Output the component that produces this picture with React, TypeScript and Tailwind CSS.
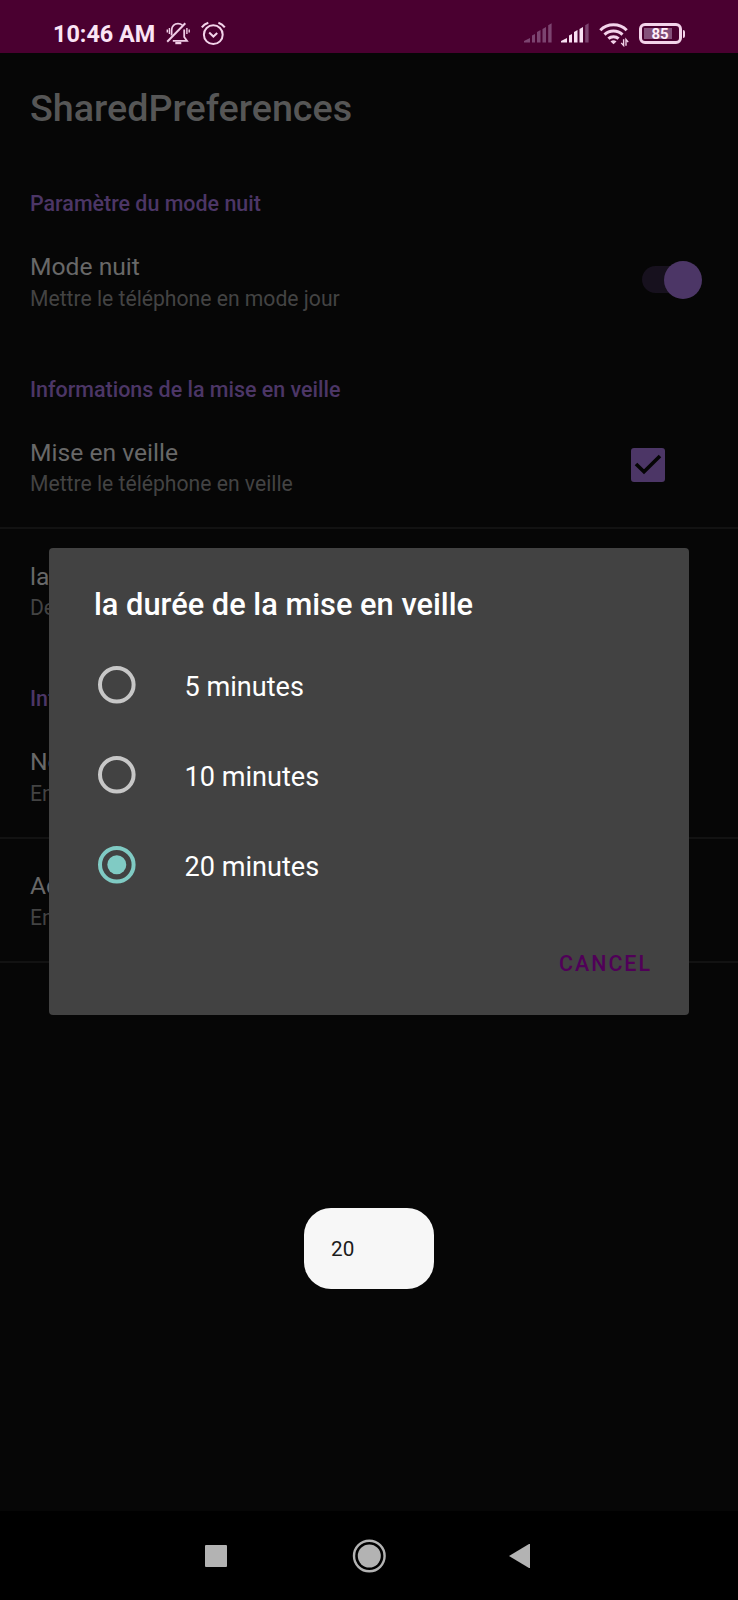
import React from "react";

function BellOff() {
  return (
    <svg className="absolute left-[166px] top-[21px]" width="25" height="25" viewBox="0 0 25 25" fill="none" stroke="#f0cde6" strokeWidth="1.8">
      <path d="M5.6 14.5V9.3C5.6 5 8.5 2.6 12 2.6c1.8 0 3.2.6 4.3 1.6M18.2 8.5V16l2.8 3.9H6.8" />
      <path d="M1.2 20.8 19.3 2.2" strokeWidth="2" />
      <path d="M9.3 22.1h6" strokeWidth="2.2" />
      <path d="M3.4 7v6M1.3 8.5v3M20.9 7v6M23.2 8.5v3" strokeWidth="1.4" />
    </svg>
  );
}

function Alarm() {
  return (
    <svg className="absolute left-[201px] top-[21px]" width="25" height="25" viewBox="0 0 25 25" fill="none" stroke="#f3d3ea" strokeWidth="2">
      <circle cx="12.3" cy="13.7" r="9.4" />
      <path d="M8.2 11.5l4.2 4 3.8-3.6" />
      <path d="M.8 6.4Q3 3.2 7.3 1.8M17.4 1.8Q21.4 3.2 23.8 6.4" />
    </svg>
  );
}

function Signal({ className, lit }: { className: string; lit: number }) {
  const bars = [
    "M0 19.5V18l6-3v4.5z",
    "M8 19.5v-7l3-1.5v8.5z",
    "M13 19.5V9l3.5-2v12.5z",
    "M18.5 19.5V6L22 4v15.5z",
    "M24.2 19.5V2.2L27.6.3v19.2z",
  ];
  return (
    <svg className={className} width="28" height="20" viewBox="0 0 28 20">
      {bars.map((d, i) => (
        <path key={d} d={d} fill={i < lit ? "#f8e0f2" : "#7c4470"} />
      ))}
    </svg>
  );
}

function Wifi() {
  return (
    <svg className="absolute left-[599px] top-[22px]" width="30" height="25" viewBox="0 0 30 25" fill="none" stroke="#f3d3ea" strokeWidth="3">
      <path d="M1.3 8.2a18.5 18.5 0 0 1 26.4 0" />
      <path d="M5.5 12.7a13 13 0 0 1 18 0" />
      <path d="M9.4 16.7a7.4 7.4 0 0 1 10.2 0" />
      <path d="M14.5 22.3l-3-2.8a4.6 4.6 0 0 1 6 0z" fill="#f3d3ea" stroke="none" />
      <path d="M24.6 17.2v6.3l-2.4-2.6M27 23.8v-6.3l2.2 2.6" strokeWidth="1.4" />
    </svg>
  );
}

function Battery() {
  return (
    <div className="absolute left-[639px] top-[23px] flex items-center">
      <div className="flex h-[21px] w-[43px] rounded-[6px] border-[3px] border-[#f3d3ea] p-[2px]">
        <div className="flex w-[28px] items-center justify-center bg-[#84507a] pl-[4px] text-[15px] font-bold leading-none text-[#ffeefa]"><span className="translate-y-px">85</span></div>
      </div>
      <div className="ml-px h-[8px] w-[2px] rounded-r bg-[#f3d3ea]" />
    </div>
  );
}

function StatusBar() {
  return (
    <header className="relative h-[53px] bg-[#4a0030]">
      <span className="absolute left-[53px] top-[18px] text-[23.4px] font-bold leading-[32px] text-[#fbe4f5]">10:46 AM</span>
      <BellOff />
      <Alarm />
      <Signal className="absolute left-[524px] top-[23px]" lit={0} />
      <Signal className="absolute left-[561px] top-[23px]" lit={4} />
      <Wifi />
      <Battery />
    </header>
  );
}

function Category({ children }: { children: string }) {
  return <h2 className="h-[61.5px] pl-[30px] pt-[32px] text-[21.45px] font-medium leading-[30px] text-[#4c3666]">{children}</h2>;
}

function Item({ title, summary, divider, children }: { title: string; summary: string; divider?: boolean; children?: React.ReactNode }) {
  return (
    <div className={`flex h-[124px] justify-between pl-[30px] pt-[33.5px] ${divider ? "border-b border-[#121212] shadow-[0_1px_0_#121212]" : ""}`}>
      <div>
        <p className="text-[24.65px] leading-[30px] text-[#686868]">{title}</p>
        <p className="pt-[0.5px] text-[21.15px] leading-[31px] text-[#434343]">{summary}</p>
      </div>
      {children}
    </div>
  );
}

function Switch() {
  return (
    <div className="mr-[36.5px] mt-[8.5px] flex h-[38px] w-[60px] items-center">
      <div className="h-[27px] w-[42px] rounded-full bg-[#17111e]" />
      <div className="-ml-[20px] size-[38px] shrink-0 rounded-full bg-[#4c3666]" />
    </div>
  );
}

function Check() {
  return (
    <svg className="mr-[73px] mt-[10.5px]" width="34" height="34" viewBox="0 0 34 34" fill="none">
      <rect width="34" height="34" rx="3" fill="#4c3666" />
      <path d="M5 16 13 23.8 29 8" stroke="#050505" strokeWidth="3.6" />
    </svg>
  );
}

function Option({ label, selected }: { label: string; selected?: boolean }) {
  return (
    <div className="flex h-[90.2px] items-center">
      <svg className="ml-[49px]" width="38" height="38" viewBox="0 0 38 38" fill="none">
        <circle cx="18.8" cy="18.8" r="16.8" stroke={selected ? "#80cbc4" : "#c7c7c7"} strokeWidth="4" />
        {selected && <circle cx="18.8" cy="18.8" r="9.5" fill="#80cbc4" />}
      </svg>
      <span className="ml-[48.5px] mt-[4px] text-[27.1px] leading-[36px] text-white">{label}</span>
    </div>
  );
}

function Dialog() {
  return (
    <section className="absolute left-[49px] top-[548px] h-[467px] w-[640px] rounded-[4px] bg-[#424242]">
      <h3 className="h-[91.6px] pl-[45px] pt-[37px] text-[30.8px] font-medium leading-[40px] text-white">la durée de la mise en veille</h3>
      <Option label="5 minutes" />
      <Option label="10 minutes" />
      <Option label="20 minutes" selected />
      <p className="mt-[38.6px] pr-[37px] text-right text-[21.4px] font-medium leading-[30px] tracking-[2px] text-[#500058]">CANCEL</p>
    </section>
  );
}

function NavBar() {
  return (
    <nav className="flex h-[89px] items-center bg-black pl-[205px]">
      <svg width="326" height="34" viewBox="0 0 326 34" fill="none">
        <rect x="0" y="6" width="22" height="22" rx="1" fill="#b3b3b3" />
        <circle cx="164.3" cy="17" r="15.3" stroke="#b3b3b3" strokeWidth="2.4" />
        <circle cx="164.3" cy="17" r="11.5" fill="#b3b3b3" />
        <path d="M304 17 324 5h1v24h-1z" fill="#b3b3b3" />
      </svg>
    </nav>
  );
}

export default function App() {
  return (
    <div className="relative flex h-[1600px] w-[738px] flex-col overflow-hidden bg-[#060606] font-['Roboto',sans-serif]">
      <StatusBar />
      <h1 className="h-[104px] shrink-0 pl-[30px] pt-[30px] text-[37.7px] font-medium leading-[50px] text-[#565656]">SharedPreferences</h1>
      <main className="flex-1">
        <Category>Paramètre du mode nuit</Category>
        <Item title="Mode nuit" summary="Mettre le téléphone en mode jour">
          <Switch />
        </Item>
        <Category>Informations de la mise en veille</Category>
        <Item title="Mise en veille" summary="Mettre le téléphone en veille" divider>
          <Check />
        </Item>
        <Item title="la" summary="De" />
        <Category>Inf</Category>
        <Item title="No" summary="En" divider />
        <Item title="Ac" summary="En" divider />
      </main>
      <NavBar />
      <Dialog />
      <div className="absolute left-[304px] top-[1208px] flex h-[81px] w-[130px] items-center rounded-[27px] bg-[#f7f7f7] pl-[27px] pt-[2px] text-[20.7px] text-[#1c1c1c]">20</div>
    </div>
  );
}
